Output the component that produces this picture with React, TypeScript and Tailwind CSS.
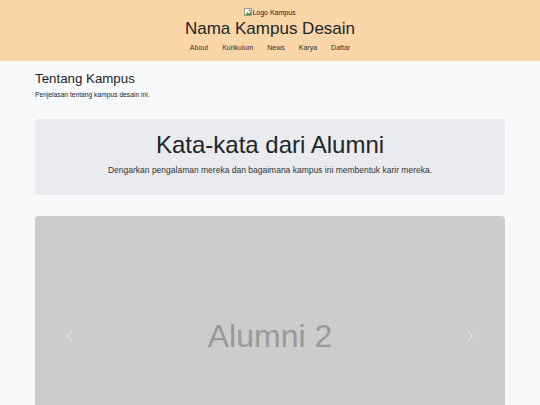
import React from 'react'

const links = ['About', 'Kurikulum', 'News', 'Karya', 'Daftar']

function BrokenImage() {
  return (
    <svg width="8" height="8" viewBox="0 0 8 8" className="inline-block align-[-1px]">
      <rect x="0.5" y="0.5" width="7" height="7" fill="#fff" stroke="#999" />
      <path d="M1 7 L3.5 4 L5 5.5 L7 3 V7 Z" fill="#5a9a4a" />
      <circle cx="5.5" cy="2.3" r="0.9" fill="#c44" />
    </svg>
  )
}

export default function App() {
  return (
    <div className="min-h-[405px] bg-[#f8f9fa] text-[#212529] font-['Liberation_Sans',Arial,sans-serif]">
      <header className="bg-[#f9d5a7] pt-[8px] pb-[9px] text-center">
        <div className="text-[7px] leading-[9px] text-[#212529]">
          <BrokenImage />
          <span>Logo Kampus</span>
        </div>
        <h1 className="text-[17px] leading-[22px] mt-[1px]">Nama Kampus Desain</h1>
        <nav className="flex justify-center gap-[14px] mt-[3px] text-[7px] leading-[9px] text-[#333]">
          {links.map((l) => (
            <a key={l} href="#">
              {l}
            </a>
          ))}
        </nav>
      </header>

      <main className="mx-[35px]">
        <section className="pt-[10px]">
          <h2 className="text-[13.3px] leading-[16px]">Tentang Kampus</h2>
          <p className="text-[6.7px] leading-[9px] mt-[2.5px]">Penjelasan tentang kampus desain ini.</p>
        </section>

        <section className="mt-[20.5px] bg-[#e9ebee] rounded-[4px] h-[76px] flex flex-col items-center pt-[12px]">
          <h2 className="text-[24px] leading-[28px] text-[#212529]">Kata-kata dari Alumni</h2>
          <p className="text-[8.5px] leading-[11px] mt-[5.5px] text-[#333]">
            Dengarkan pengalaman mereka dan bagaimana kampus ini membentuk karir mereka.
          </p>
        </section>

        <section className="mt-[21px] bg-[#cccccc] rounded-t-[4px] h-[240px] relative flex items-center justify-center">
          <span className="text-[32px] leading-[36px] text-[#999999]">Alumni 2</span>
          <button className="absolute left-[30px] top-1/2 -translate-y-1/2 text-white/70">
            <svg width="10" height="14" viewBox="0 0 10 14" fill="none" stroke="currentColor" strokeWidth="1">
              <path d="M7 2 L2.5 7 L7 12" />
            </svg>
          </button>
          <button className="absolute right-[30px] top-1/2 -translate-y-1/2 text-white/70">
            <svg width="10" height="14" viewBox="0 0 10 14" fill="none" stroke="currentColor" strokeWidth="1">
              <path d="M3 2 L7.5 7 L3 12" />
            </svg>
          </button>
        </section>
      </main>
    </div>
  )
}
